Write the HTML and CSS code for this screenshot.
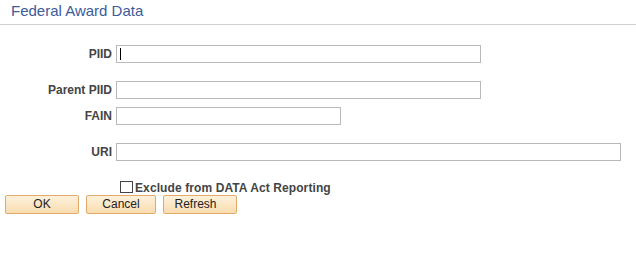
FILE: index.html
```html
<!DOCTYPE html>
<html>
<head>
<meta charset="utf-8">
<link rel="stylesheet" href="styles.css">
</head>
<body>
<div class="page">
  <div class="header"><span class="title">Federal Award Data</span></div>
  <div class="form">
    <div class="row r-piid">
      <label class="lbl">PIID</label>
      <div class="field w365"><span class="caret"></span></div>
    </div>
    <div class="row r-parent">
      <label class="lbl">Parent PIID</label>
      <div class="field w365"></div>
    </div>
    <div class="row r-fain">
      <label class="lbl">FAIN</label>
      <div class="field w225"></div>
    </div>
    <div class="row r-uri">
      <label class="lbl">URI</label>
      <div class="field w505"></div>
    </div>
    <div class="check-row">
      <span class="box"></span>
      <span class="check-label">Exclude from DATA Act Reporting</span>
    </div>
  </div>
  <div class="buttons">
    <button class="btn b-ok">OK</button>
    <button class="btn b-cancel">Cancel</button>
    <button class="btn b-refresh">Refresh</button>
  </div>
</div>
</body>
</html>
```
FILE: styles.css
```css
html, body {
  margin: 0;
  padding: 0;
  background: #ffffff;
}
.page {
  font-family: "Liberation Sans", Arial, sans-serif;
  width: 636px;
}
.header {
  height: 25px;
  border-bottom: 1px solid #cfcfcf;
  box-sizing: border-box;
  padding-left: 11px;
  display: flex;
  align-items: center;
}
.title {
  font-size: 15px;
  color: #3d5b99;
  line-height: 18px;
  margin-top: -2px;
}
.form {
  display: flex;
  flex-direction: column;
}
.row {
  display: flex;
  align-items: center;
  height: 18px;
}
.r-piid { margin-top: 20px; }
.r-parent { margin-top: 18px; }
.r-fain { margin-top: 8px; }
.r-uri { margin-top: 18px; }
.lbl {
  width: 112px;
  text-align: right;
  font-size: 12px;
  font-weight: bold;
  color: #444444;
  padding-right: 4px;
  box-sizing: content-box;
}
.field {
  height: 18px;
  box-sizing: border-box;
  border: 1px solid #b9b9b9;
  background: #fff;
  display: flex;
  align-items: center;
}
.w365 { width: 365px; }
.w225 { width: 225px; }
.w505 { width: 505px; }
.caret {
  display: block;
  width: 1px;
  height: 12px;
  background: #000;
  margin-left: 3px;
}
.check-row {
  display: flex;
  align-items: center;
  margin-top: 19px;
  padding-left: 120px;
  height: 13px;
}
.box {
  width: 13px;
  height: 12px;
  box-sizing: border-box;
  border: 1px solid #444;
  background: #fff;
}
.check-label {
  font-size: 12px;
  font-weight: bold;
  color: #444444;
  margin-left: 2px;
  margin-top: 3px;
  letter-spacing: 0.1px;
}
.buttons {
  display: flex;
  gap: 7px;
  padding-left: 5px;
  margin-top: 2px;
}
.btn {
  height: 19px;
  box-sizing: border-box;
  border: 1px solid #e3a969;
  border-radius: 2px;
  background: linear-gradient(#fdf1dc, #f9dcb0);
  font-family: "Liberation Sans", Arial, sans-serif;
  font-size: 12px;
  color: #222;
  padding: 0;
  line-height: 17px;
}
.b-ok { width: 74px; }
.b-cancel { width: 70px; }
.b-refresh { width: 74px; padding-right: 9px; }
```
